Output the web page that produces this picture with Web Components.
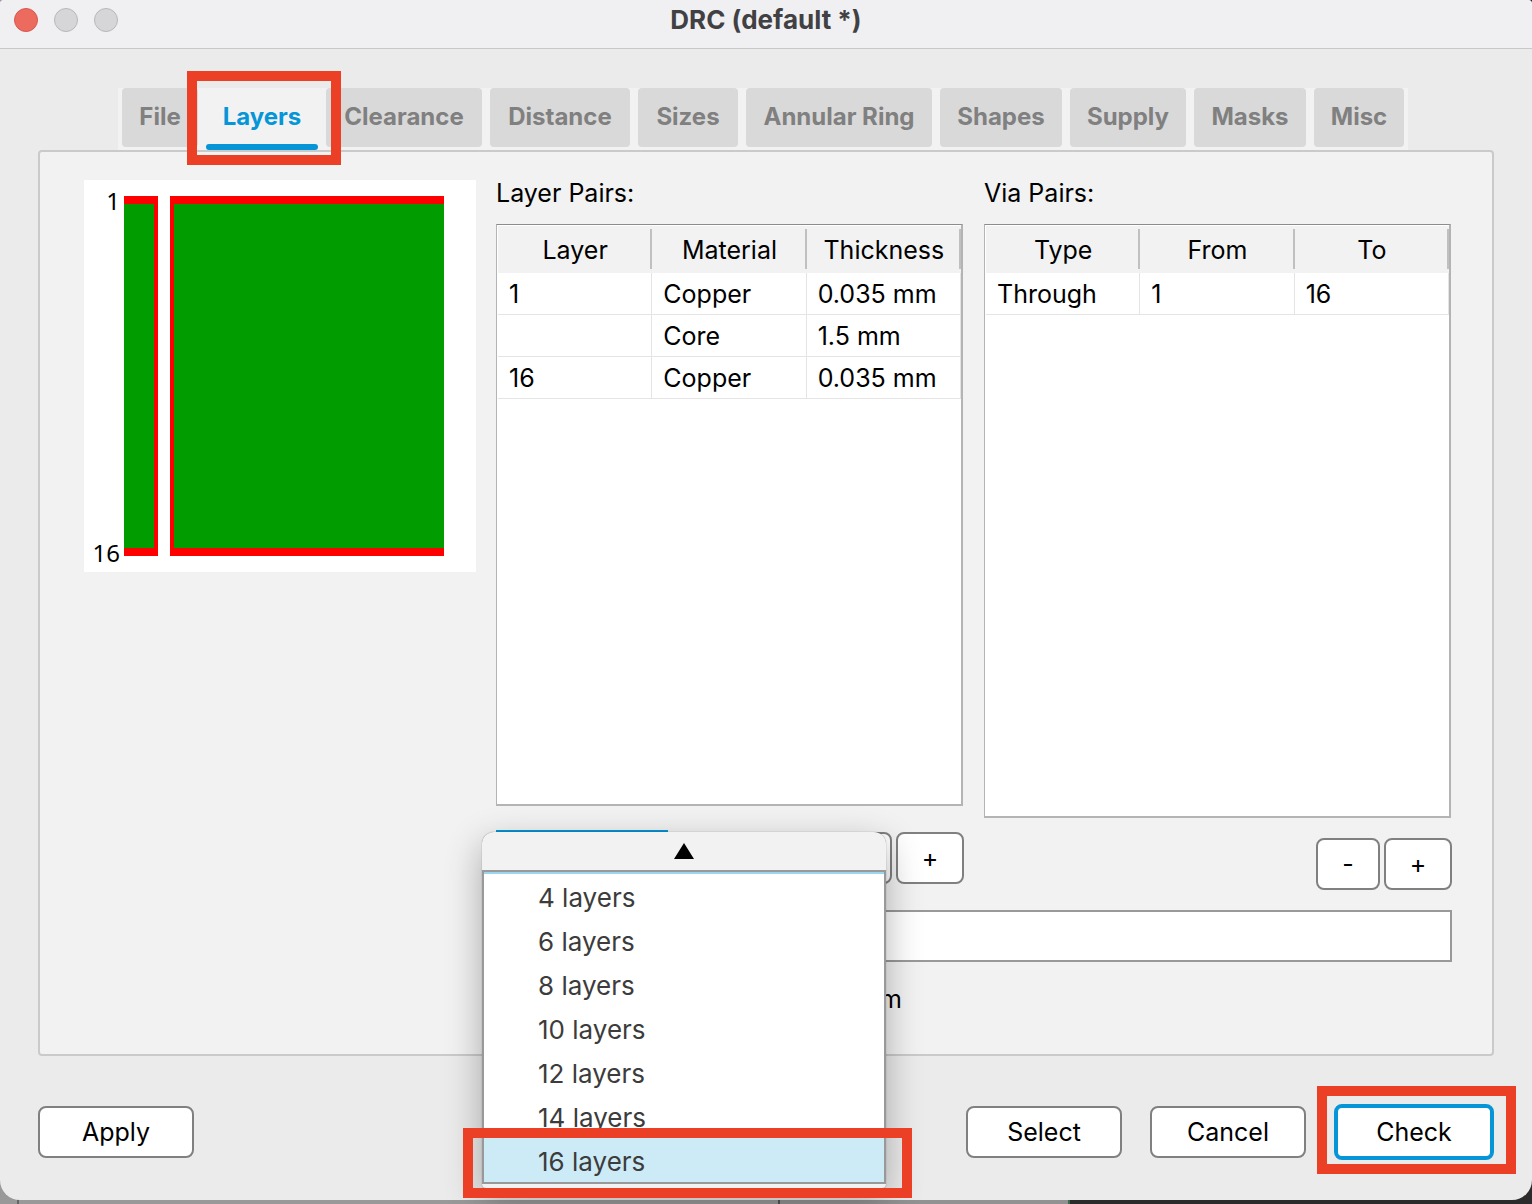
<!DOCTYPE html>
<html lang="en">
<head>
<meta charset="utf-8">
<title>DRC (default *)</title>
<style>
  html {
    height: 100%;
  }

  body {
    margin: 0;
    min-height: 100%;
    display: flex;
    background: linear-gradient(90deg, #999 0 17px, #666 17px 19px, #999 19px 778px, #555 778px 780px, #929292 780px 1068px, #3c6b50 1068px 1070px, #2b2b2b 1070px);
    font: 25px/28px Inter, "Liberation Sans", sans-serif;
    color: #000;
    --accent: #0696d7;
    --mark: #ec4026;
    --line: #808080;
    --pane: #f2f2f2;
  }
</style>
</head>
<body>
<drc-window heading="DRC (default *)">
  <drc-tabs slot="tabs">
    <drc-tab>File</drc-tab>
    <drc-tab selected>Layers</drc-tab>
    <drc-tab>Clearance</drc-tab>
    <drc-tab>Distance</drc-tab>
    <drc-tab>Sizes</drc-tab>
    <drc-tab>Annular Ring</drc-tab>
    <drc-tab>Shapes</drc-tab>
    <drc-tab>Supply</drc-tab>
    <drc-tab>Masks</drc-tab>
    <drc-tab>Misc</drc-tab>
  </drc-tabs>
  <layers-panel></layers-panel>
  <drc-button slot="start">Apply</drc-button>
  <drc-button slot="end">Select</drc-button>
  <drc-button slot="end">Cancel</drc-button>
  <drc-button slot="end" primary marked>Check</drc-button>
</drc-window>

<script>
class DrcWindow extends HTMLElement {
  constructor() {
    super();
    this.attachShadow({ mode: "open" });
  }

  connectedCallback() {
    this.shadowRoot.innerHTML = `
      <style>
        :host {
          flex: 1;
          display: flex;
          flex-direction: column;
          margin-bottom: 4px;
          background: #ebebeb;
          border-radius: 4px 4px 20px 20px;
        }

        header {
          display: grid;
          grid-template-columns: 1fr auto 1fr;
          align-items: center;
          height: 40px;
          padding: 0 14px 8px;
          border-bottom: 1px solid #c8c8ca;
          background: #f0f0f2;
          border-radius: 4px 4px 0 0;
        }

        .lights {
          display: flex;
          gap: 16px;
        }

        .lights button {
          width: 24px;
          height: 24px;
          padding: 0;
          border: 1px solid #b8b8ba;
          border-radius: 50%;
          background: #d6d6d8;
        }

        .lights .close {
          border-color: #d8574c;
          background: #ed6a5f;
        }

        h1 {
          margin: 0;
          font-size: 26px;
          font-weight: 700;
          color: #414143;
        }

        main {
          flex: 1;
          display: flex;
          flex-direction: column;
          padding: 39px 38px 0;
        }

        footer {
          display: flex;
          align-items: center;
          gap: 28px;
          padding: 48px 38px 40px;
        }

        .spacer {
          flex: 1;
        }
      </style>

      <header>
        <div class="lights">
          <button class="close" aria-label="Close"></button>
          <button aria-label="Minimize" disabled></button>
          <button aria-label="Zoom" disabled></button>
        </div>
        <h1>${this.getAttribute("heading")}</h1>
      </header>
      <main>
        <slot name="tabs"></slot>
        <slot></slot>
      </main>
      <footer>
        <slot name="start"></slot>
        <span class="spacer"></span>
        <slot name="end"></slot>
      </footer>
    `;
  }
}

class DrcTabs extends HTMLElement {
  constructor() {
    super();
    this.attachShadow({ mode: "open" });
    this.shadowRoot.innerHTML = `
      <style>
        :host {
          display: grid;
          grid-template-columns: 76fr 112fr 156fr 140fr 100fr 186fr 122fr 116fr 112fr 90fr;
          gap: 8px;
          margin: 0 86px 0 80px;
          padding: 0 4px 3px;
          background: var(--pane);
        }
      </style>
      <slot></slot>
    `;
    this.setAttribute("role", "tablist");
  }
}

class DrcTab extends HTMLElement {
  constructor() {
    super();
    this.attachShadow({ mode: "open" });
  }

  connectedCallback() {
    const selected = this.hasAttribute("selected");

    this.shadowRoot.innerHTML = `
      <style>
        :host {
          display: block;
          position: relative;
          min-width: 0;
        }

        button {
          width: 100%;
          height: 59px;
          padding: 0 0 2px;
          border: 0;
          border-radius: 4px;
          background: #d9d9d9;
          color: #808080;
          font: inherit;
          font-size: 24px;
          font-weight: 700;
          white-space: nowrap;
        }

        :host([selected]) button {
          background: none;
          color: var(--accent);
        }

        .underline {
          position: absolute;
          inset: auto 0 -3px;
          height: 6px;
          border-radius: 3px;
          background: var(--accent);
        }

        .mark {
          position: absolute;
          inset: -17px -23px -18px -19px;
          z-index: 1;
          border: 10px solid var(--mark);
          pointer-events: none;
        }
      </style>

      <button role="tab" aria-selected="${selected}"><slot></slot></button>
      ${selected ? `<span class="underline"></span><span class="mark"></span>` : ""}
    `;
  }
}

class DrcButton extends HTMLElement {
  constructor() {
    super();
    this.attachShadow({ mode: "open" });
  }

  connectedCallback() {
    this.shadowRoot.innerHTML = `
      <style>
        :host {
          display: block;
          position: relative;
        }

        button {
          display: block;
          width: 156px;
          height: 52px;
          padding: 0;
          border: 2px solid var(--line);
          border-radius: 8px;
          background: #fff;
          color: #000;
          font: inherit;
        }

        :host([small]) button {
          width: 68px;
        }

        :host([small="minus"]) button {
          width: 64px;
        }

        :host([primary]) button {
          width: 160px;
          height: 56px;
          border: 4px solid var(--accent);
        }

        .mark {
          position: absolute;
          inset: -18px -22px -14px -17px;
          border: 10px solid var(--mark);
          pointer-events: none;
        }
      </style>

      <button><slot></slot></button>
      ${this.hasAttribute("marked") ? `<span class="mark"></span>` : ""}
    `;
  }
}

class DataTable extends HTMLElement {
  constructor() {
    super();
    this.attachShadow({ mode: "open" });
  }

  connectedCallback() {
    // Columns are split by commas, rows by semicolons
    const columns = this.getAttribute("columns").split(",");
    const rows = this.getAttribute("rows").split(";").map((row) => row.split(","));

    this.shadowRoot.innerHTML = `
      <style>
        :host {
          display: block;
          padding: 1px 0 0 1px;
          border: solid #b4b4b4;
          border-width: 1px 2px 2px 1px;
          border-top-color: #8c8c8c;
          background: #fff;
        }

        table {
          width: 100%;
          table-layout: fixed;
          border-collapse: separate;
          border-spacing: 0;
        }

        th {
          height: 47px;
          padding: 0;
          font-weight: 400;
          background: linear-gradient(#c0c0c0, #c0c0c0) right 3px / 2px 40px no-repeat, var(--pane);
        }

        td {
          height: 41px;
          padding: 0 0 0 11px;
          border: solid #e4e4e4;
          border-width: 0 1px 1px 0;
          white-space: nowrap;
        }
      </style>

      <table aria-label="${this.getAttribute("label")}">
        <thead>
          <tr>${columns.map((column) => `<th scope="col">${column}</th>`).join("")}</tr>
        </thead>
        <tbody>
          ${rows.map((row) => `<tr>${row.map((cell) => `<td>${cell}</td>`).join("")}</tr>`).join("")}
        </tbody>
      </table>
    `;
  }
}

class LayerStack extends HTMLElement {
  constructor() {
    super();
    this.attachShadow({ mode: "open" });
    this.shadowRoot.innerHTML = `
      <style>
        :host {
          display: block;
        }

        svg {
          display: block;
          width: 100%;
          background: #fff;
        }

        text {
          font: 24px "Noto Sans", sans-serif;
          text-anchor: end;
        }
      </style>

      <svg viewBox="0 0 392 392" shape-rendering="crispEdges">
        <!-- Copper -->
        <path fill="#f00" d="M40 16h34v360H40zM86 16h274v360H86z"/>
        <!-- Core -->
        <path fill="#009c00" d="M40 24h30v344H40zM90 24h270v344H90z"/>
        <text x="36" y="30">1</text>
        <text x="36" y="382">16</text>
      </svg>
    `;
  }
}

class LayerPicker extends HTMLElement {
  constructor() {
    super();
    this.attachShadow({ mode: "open" });
    this.shadowRoot.innerHTML = `
      <style>
        :host {
          display: block;
          position: relative;
          width: 172px;
        }

        .field {
          display: block;
          width: 100%;
          height: 56px;
          border: 4px solid var(--accent);
          background: #fff;
        }

        .popup {
          position: absolute;
          top: 2px;
          left: -14px;
          z-index: 2;
          box-sizing: border-box;
          width: 404px;
          padding-bottom: 4px;
          border-radius: 12px 12px 4px 4px;
          background: var(--pane);
          box-shadow: 0 0 1px rgba(0, 0, 0, 0.5), 0 12px 36px rgba(0, 0, 0, 0.3);
        }

        .scroll-up {
          display: flex;
          justify-content: center;
          align-items: center;
          width: 100%;
          height: 38px;
          padding: 0;
          border: 0;
          background: none;
        }

        .list {
          display: block;
          box-sizing: border-box;
          width: 100%;
          height: 314px;
          padding: 2px 0 0;
          border: 2px solid #999;
          border-radius: 0;
          outline: 0;
          overflow: hidden;
          background: linear-gradient(#9bd5ef, #9bd5ef) top / 100% 2px no-repeat, #fff;
          font: inherit;
          font-size: 26px;
        }

        option {
          box-sizing: border-box;
          height: 44px;
          min-height: 44px;
          padding: 8px 0 8px 54px;
          font: inherit;
          line-height: 28px;
          color: #3c3c3c;
        }

        option:checked {
          background: linear-gradient(#cdeaf7, #cdeaf7);
          -webkit-text-fill-color: #3c3c3c;
        }

        .mark {
          position: absolute;
          inset: auto -26px -10px -19px;
          height: 50px;
          border: 10px solid var(--mark);
          pointer-events: none;
        }
      </style>

      <select class="field" aria-label="Layer count"></select>
      <div class="popup">
        <button class="scroll-up" aria-label="Scroll up">
          <svg width="20" height="16" viewBox="0 0 20 16"><path d="M10 0l10 16H0z"/></svg>
        </button>
        <select class="list" size="7" aria-label="Layer presets">
          ${[4, 6, 8, 10, 12, 14, 16].map((n) => `<option ${n === 16 ? "selected" : ""}>${n} layers</option>`).join("")}
        </select>
        <span class="mark"></span>
      </div>
    `;
  }
}

class LayersPanel extends HTMLElement {
  constructor() {
    super();
    this.attachShadow({ mode: "open" });
    this.shadowRoot.innerHTML = `
      <style>
        :host {
          flex: 1;
          display: grid;
          grid-template-columns: 392px 1fr 1fr;
          grid-template-rows: 1fr 52px auto;
          gap: 20px;
          padding: 28px 40px 38px 44px;
          border: 2px solid #cacaca;
          border-radius: 4px;
          background: var(--pane);
        }

        section {
          display: flex;
          flex-direction: column;
          min-width: 0;
        }

        h2 {
          margin: 0 0 18px;
          font-size: inherit;
          font-weight: 400;
          line-height: 26px;
        }

        data-table {
          flex: 1;
          margin-right: 1px;
        }

        .actions {
          display: flex;
          align-items: center;
          justify-content: flex-end;
          gap: 4px;
          margin-top: 20px;
        }

        .pairs .actions {
          margin: 24px 0 4px;
        }

        layer-picker {
          margin-right: auto;
        }

        input {
          grid-column: 2 / 4;
          box-sizing: border-box;
          width: 100%;
          border: 2px solid #999;
          border-radius: 0;
          background: #fff;
          font: inherit;
        }

        output {
          grid-column: 2;
          width: 406px;
          line-height: 34px;
          text-align: right;
        }
      </style>

      <layer-stack></layer-stack>
      <section class="pairs">
        <h2>Layer Pairs:</h2>
        <data-table label="Layer pairs" columns="Layer,Material,Thickness"
          rows="1,Copper,0.035 mm;,Core,1.5 mm;16,Copper,0.035 mm"></data-table>
        <div class="actions">
          <layer-picker></layer-picker>
          <drc-button small="minus">-</drc-button>
          <drc-button small>+</drc-button>
        </div>
      </section>
      <section>
        <h2>Via Pairs:</h2>
        <data-table label="Via pairs" columns="Type,From,To" rows="Through,1,16"></data-table>
        <div class="actions">
          <drc-button small="minus">-</drc-button>
          <drc-button small>+</drc-button>
        </div>
      </section>
      <input type="text" aria-label="Layer setup">
      <output>mm</output>
    `;
  }
}

customElements.define("drc-window", DrcWindow);
customElements.define("drc-tabs", DrcTabs);
customElements.define("drc-tab", DrcTab);
customElements.define("drc-button", DrcButton);
customElements.define("data-table", DataTable);
customElements.define("layer-stack", LayerStack);
customElements.define("layer-picker", LayerPicker);
customElements.define("layers-panel", LayersPanel);
</script>
</body>
</html>
